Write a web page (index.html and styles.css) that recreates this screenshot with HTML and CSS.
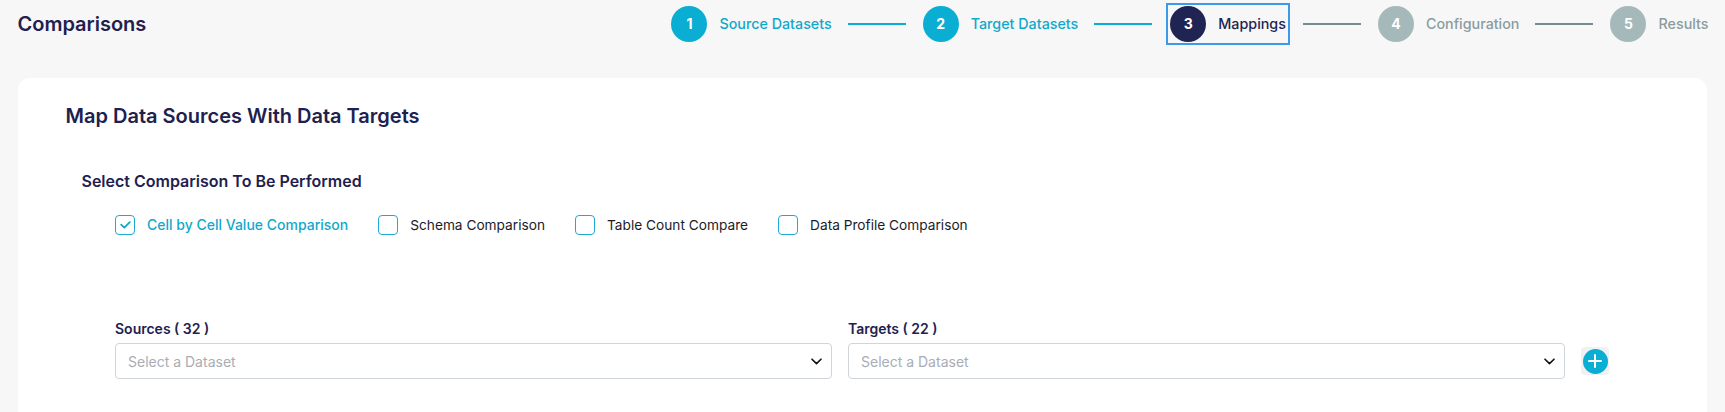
FILE: index.html
```html
<!DOCTYPE html>
<html lang="en">
<head>
<meta charset="utf-8">
<title>Comparisons</title>
<link rel="stylesheet" href="styles.css">
</head>
<body>
<div class="page">
  <header class="topbar">
    <h1 class="page-title">Comparisons</h1>
    <ol class="stepper">
      <li class="step done"><span class="step-num">1</span><span class="step-label">Source Datasets</span></li>
      <li class="connector done"></li>
      <li class="step done"><span class="step-num">2</span><span class="step-label">Target Datasets</span></li>
      <li class="connector done"></li>
      <li class="step active"><span class="step-num">3</span><span class="step-label">Mappings</span></li>
      <li class="connector"></li>
      <li class="step"><span class="step-num">4</span><span class="step-label">Configuration</span></li>
      <li class="connector"></li>
      <li class="step"><span class="step-num">5</span><span class="step-label">Results</span></li>
    </ol>
  </header>

  <main class="card">
    <h2 class="card-title">Map Data Sources With Data Targets</h2>

    <section class="compare-section">
      <h3 class="section-title">Select Comparison To Be Performed</h3>
      <div class="options">
        <label class="option checked">
          <span class="box"><svg class="check" width="11" height="8" viewBox="0 0 11 8"><path d="M1.2 3.6 L4.3 6.6 L9.8 1.2" fill="none" stroke="currentColor" stroke-width="1.8" stroke-linecap="round" stroke-linejoin="round"/></svg></span>
          <span class="option-label">Cell by Cell Value Comparison</span>
        </label>
        <label class="option">
          <span class="box"></span>
          <span class="option-label">Schema Comparison</span>
        </label>
        <label class="option">
          <span class="box"></span>
          <span class="option-label">Table Count Compare</span>
        </label>
        <label class="option">
          <span class="box"></span>
          <span class="option-label">Data Profile Comparison</span>
        </label>
      </div>
    </section>

    <div class="mapping-row">
      <div class="field">
        <div class="field-label">Sources ( 32 )</div>
        <div class="select">
          <span class="placeholder">Select a Dataset</span>
          <svg class="chevron" width="11" height="7" viewBox="0 0 11 7"><path d="M1 1.2 L5.5 5.6 L10 1.2" fill="none" stroke="#111" stroke-width="1.6" stroke-linecap="round" stroke-linejoin="round"/></svg>
        </div>
      </div>
      <div class="field">
        <div class="field-label">Targets ( 22 )</div>
        <div class="select">
          <span class="placeholder">Select a Dataset</span>
          <svg class="chevron" width="11" height="7" viewBox="0 0 11 7"><path d="M1 1.2 L5.5 5.6 L10 1.2" fill="none" stroke="#111" stroke-width="1.6" stroke-linecap="round" stroke-linejoin="round"/></svg>
        </div>
      </div>
      <button class="add-btn" type="button" aria-label="Add mapping">
        <span class="add-circle"><svg width="14" height="14" viewBox="0 0 14 14"><path d="M7 1 V13 M1 7 H13" stroke="#fff" stroke-width="2" stroke-linecap="round"/></svg></span>
      </button>
    </div>
  </main>
</div>
</body>
</html>
```

FILE: styles.css
```css
* {
  box-sizing: border-box;
  margin: 0;
  padding: 0;
}

html,
body {
  background: #f7f7f7;
}

body {
  font-family: Inter, "Noto Sans", sans-serif;
  color: #1e2150;
  width: 1725px;
  height: 412px;
  overflow: hidden;
}

.page {
  padding: 0 18px 0 17.5px;
}

/* ---------- top bar ---------- */
.topbar {
  height: 47px;
  display: flex;
  align-items: center;
  justify-content: space-between;
}

.page-title {
  font-size: 20px;
  font-weight: 600;
  color: #1e2150;
}

.stepper {
  list-style: none;
  display: flex;
  align-items: center;
  margin-right: -1.5px;
}

.step {
  display: flex;
  align-items: center;
  gap: 12px;
}

.step-num {
  width: 36px;
  height: 36px;
  border-radius: 50%;
  display: flex;
  align-items: center;
  justify-content: center;
  background: #a5b8ba;
  color: #fff;
  font-size: 14px;
  font-weight: 700;
}

.step-label {
  font-size: 14.3px;
  font-weight: 500;
  color: #8c9c9e;
}

.step.done .step-num {
  background: #09aed2;
}

.step.done .step-label {
  color: #12a8cd;
}

.step.active {
  outline: 2px solid #3d99ea;
  outline-offset: 1px;
  padding: 0 1px;
}

.step.active .step-num {
  background: #1f2453;
}

.step.active .step-label {
  color: #1f2453;
}

.connector {
  width: 58px;
  height: 2px;
  margin: 0 17px 0 16px;
  background: #758d91;
}

.connector.done {
  background: #0aaed3;
}

/* ---------- card ---------- */
.card {
  background: #fff;
  border-radius: 12px;
  margin-top: 31px;
  padding: 26px 48px 60px 48px;
  min-height: 400px;
}

.card-title {
  font-size: 20px;
  line-height: 24px;
  font-weight: 600;
  color: #1e2150;
}

.compare-section {
  margin-top: 43px;
  padding-left: 16px;
}

.section-title {
  font-size: 16px;
  line-height: 20px;
  font-weight: 600;
  color: #1e2150;
}

.options {
  display: flex;
  align-items: center;
  margin-top: 23.5px;
  padding-left: 33.5px;
}

.option {
  display: flex;
  align-items: center;
  gap: 12px;
  margin-right: 30px;
  font-size: 13.7px;
  line-height: 20px;
  color: #1b1c2a;
}

.box {
  width: 20px;
  height: 20px;
  border: 1.5px solid #1fa9cf;
  border-radius: 4px;
  display: flex;
  align-items: center;
  justify-content: center;
  color: #12a8cd;
}

.option.checked .option-label {
  color: #12a8cd;
  font-weight: 500;
  font-size: 14px;
}

/* ---------- mapping row ---------- */
.mapping-row {
  display: flex;
  align-items: flex-end;
  gap: 16.5px;
  margin-top: 85.5px;
  padding: 0 50px 0 49.5px;
}

.field {
  flex: 1;
  min-width: 0;
}

.field-label {
  font-size: 14px;
  line-height: 18px;
  font-weight: 600;
  color: #1e2150;
}

.select {
  margin-top: 5px;
  height: 36px;
  border: 1px solid #d0d5dc;
  border-radius: 4px;
  display: flex;
  align-items: center;
  justify-content: space-between;
  padding: 0 9px 0 12px;
  background: #fff;
}

.placeholder {
  font-size: 14px;
  color: #a9adb3;
}

.add-btn {
  width: 28px;
  height: 28px;
  margin-bottom: 4px;
  border: none;
  border-radius: 4px;
  background: #f0f1f3;
  display: flex;
  align-items: center;
  justify-content: center;
  flex: none;
}

.add-circle {
  width: 25px;
  height: 25px;
  border-radius: 50%;
  background: #0aaed3;
  display: flex;
  align-items: center;
  justify-content: center;
}
```
